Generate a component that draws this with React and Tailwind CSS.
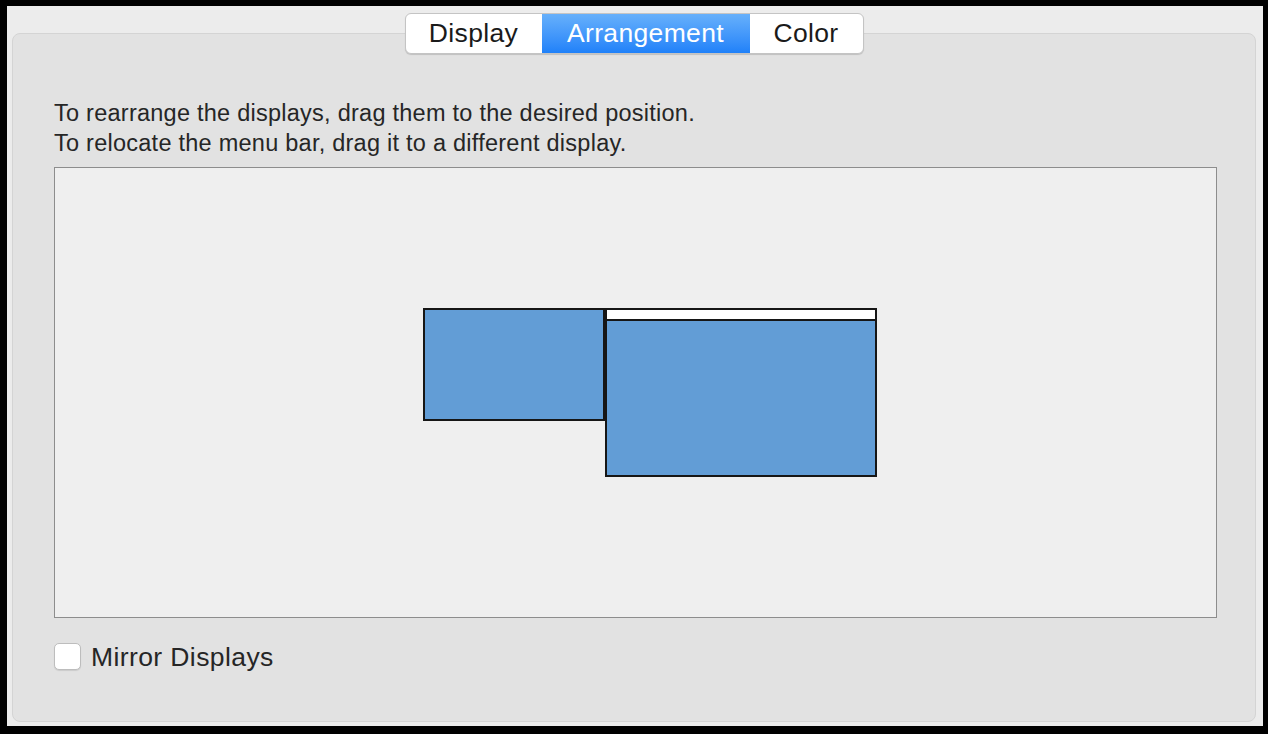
import React from "react";

const font = { fontFamily: '"Liberation Sans", Arial, Helvetica, sans-serif' };

export default function App() {
  return (
    <div className="w-[1268px] h-[734px] bg-black pt-[6px] pl-[7px] pr-[5px] pb-[8px]" style={font}>
      <div className="w-full h-full bg-[#ececec] flex flex-col pl-[5px] pr-[7px] pb-[4px]">
        <div className="flex justify-center pt-[7px] relative z-10">
          <div className="flex h-[41px] rounded-[6px] border border-[#c4c4c4] bg-white shadow-[0_1px_1px_rgba(0,0,0,0.15)] overflow-hidden text-[26.5px] tracking-[0.35px] leading-none">
            <div className="w-[136px] flex items-center justify-center text-[#1a1a1a]">Display</div>
            <div className="w-[208px] flex items-center justify-center text-white bg-gradient-to-b from-[#66b0fb] to-[#1f81f9]">Arrangement</div>
            <div className="w-[113px] flex items-center justify-center text-[#1a1a1a]">Color</div>
          </div>
        </div>
        <div className="mt-[-21px] flex-1 rounded-[8px] border border-[#d4d4d4] bg-[#e2e2e2] pl-[41px] pr-[38px] pt-[65px] flex flex-col">
          <div className="text-[23.5px] tracking-[0.25px] leading-[29.5px] text-[#262626]">
            <div>To rearrange the displays, drag them to the desired position.</div>
            <div>To relocate the menu bar, drag it to a different display.</div>
          </div>
          <div className="mt-[9px] h-[451px] border border-[#8d8d8d] bg-[#efefef] relative">
            <div className="absolute left-[368px] top-[140px] w-[182px] h-[113px] border-2 border-[#161616] bg-[#629dd6]" />
            <div className="absolute left-[550px] top-[140px] w-[272px] h-[169px] border-2 border-[#161616] bg-[#629dd6] flex flex-col">
              <div className="h-[11px] bg-white border-b-2 border-[#161616]" />
            </div>
          </div>
          <div className="mt-[24px] flex items-center gap-[10px]">
            <div className="w-[27px] h-[27px] rounded-[5px] border border-[#bdbdbd] bg-white shadow-[0_1px_1px_rgba(0,0,0,0.1)]" />
            <span className="text-[26.5px] tracking-[0.4px] leading-none text-[#262626] mt-[2px]">Mirror Displays</span>
          </div>
        </div>
      </div>
    </div>
  );
}
